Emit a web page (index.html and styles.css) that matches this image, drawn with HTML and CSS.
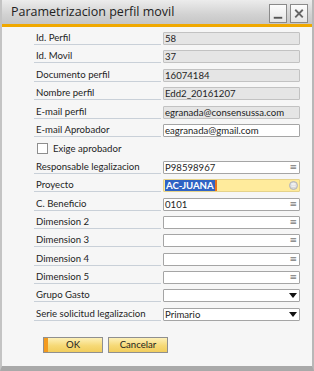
FILE: index.html
```html
<!DOCTYPE html>
<html>
<head>
<meta charset="utf-8">
<link rel="stylesheet" href="styles.css">
</head>
<body>
<div class="window">
  <div class="titlebar">
    <span class="title">Parametrizacion perfil movil</span>
    <div class="tbtns">
      <span class="tbtn"><svg width="17" height="18" viewBox="0 0 17 18"><rect x="4" y="12" width="9" height="2" fill="#555"/></svg></span>
      <span class="tbtn"><svg width="17" height="18" viewBox="0 0 17 18"><path d="M4.5 4.5 L12.5 12.5 M12.5 4.5 L4.5 12.5" stroke="#666" stroke-width="2"/></svg></span>
    </div>
  </div>
  <div class="content">
    <div class="form">
      <div class="row"><span class="lbl">Id. Perfil</span><span class="fld ro">58</span></div>
      <div class="row"><span class="lbl">Id. Movil</span><span class="fld ro">37</span></div>
      <div class="row"><span class="lbl">Documento perfil</span><span class="fld ro">16074184</span></div>
      <div class="row"><span class="lbl">Nombre perfil</span><span class="fld ro">Edd2_20161207</span></div>
      <div class="row"><span class="lbl">E-mail perfil</span><span class="fld ro">egranada@consensussa.com</span></div>
      <div class="row"><span class="lbl">E-mail Aprobador</span><span class="fld">eagranada@gmail.com</span></div>
      <div class="row chkrow"><span class="chk"></span><span class="chklbl">Exige aprobador</span></div>
      <div class="row"><span class="lbl">Responsable legalizacion</span><span class="fld">P98598967<span class="ico">≡</span></span></div>
      <div class="row"><span class="lbl">Proyecto</span><span class="fld active"><span class="sel">AC-JUANA</span><span class="caret"></span><span class="circ">≡</span></span></div>
      <div class="row"><span class="lbl">C. Beneficio</span><span class="fld">0101<span class="ico">≡</span></span></div>
      <div class="row"><span class="lbl">Dimension 2</span><span class="fld"><span class="ico">≡</span></span></div>
      <div class="row"><span class="lbl">Dimension 3</span><span class="fld"><span class="ico">≡</span></span></div>
      <div class="row"><span class="lbl">Dimension 4</span><span class="fld"><span class="ico">≡</span></span></div>
      <div class="row"><span class="lbl">Dimension 5</span><span class="fld"><span class="ico">≡</span></span></div>
      <div class="row"><span class="lbl">Grupo Gasto</span><span class="fld"><span class="tri"></span></span></div>
      <div class="row"><span class="lbl">Serie solicitud legalizacion</span><span class="fld">Primario<span class="tri"></span></span></div>
    </div>
    <div class="buttons">
      <span class="btn ok">OK</span>
      <span class="btn">Cancelar</span>
    </div>
  </div>
</div>
</body>
</html>
```
FILE: styles.css
```css
* { box-sizing: border-box; }
html, body { margin: 0; padding: 0; }
body { width: 314px; height: 371px; overflow: hidden; font-family: Lato, "Open Sans", sans-serif; color: #1e1e1e; }
.window { width: 314px; height: 371px; display: flex; flex-direction: column; border-left: 2px solid #c4c4c4; border-right: 2px solid #b8b8b8; border-bottom: 5px solid #a9a9a9; background: #f6f6f6; }
.titlebar { height: 27px; flex: none; display: flex; align-items: flex-start; justify-content: space-between; background: linear-gradient(#ececec, #d2d2d2 60%, #c6c6c6); border-bottom: 3px solid #f0a800; padding: 0 4px 0 9px; }
.title { font-family: "Open Sans", sans-serif; font-size: 12.5px; line-height: 24px; color: #222; }
.tbtns { display: flex; gap: 3px; padding-top: 4px; }
.tbtn { width: 18px; height: 19px; border: 1px solid #8a8a8a; background: linear-gradient(#fdfdfd, #e4e4e4); display: flex; }
.content { padding: 5px 12px 0 32px; flex: 1; }
.form { display: flex; flex-direction: column; }
.row { height: 18.4px; display: grid; grid-template-columns: 127px 137px; column-gap: 2px; align-items: start; }
.lbl { height: 13px; border-bottom: 1px solid #c9d0d8; font-size: 9.6px; line-height: 12px; padding-left: 2px; white-space: nowrap; overflow: hidden; }
.fld { position: relative; height: 13px; border: 1px solid #a5a5a5; background: #fff; font-size: 9.6px; line-height: 11px; padding-left: 1px; white-space: nowrap; border-radius: 1px; }
.fld.ro { background: #e5e5e5; border-color: #c2c2c2; }
.fld.active { background: #ffeb9c; border-color: #e5d28a; }
.sel { background: #2f63c4; color: #fff; padding: 0 1px; display: inline-block; height: 11px; font-weight: bold; }
.caret { display: inline-block; width: 2px; height: 11px; background: #e8731c; vertical-align: top; }
.ico { position: absolute; right: 2px; top: -1px; font-family: "DejaVu Sans", sans-serif; font-size: 9px; line-height: 12px; color: #777; }
.circ { position: absolute; right: 1px; top: 1px; width: 9px; height: 9px; border-radius: 50%; background: #d8d8d8; border: 1px solid #b5b5b5; color: #fff; font-family: "DejaVu Sans", sans-serif; font-size: 7px; line-height: 7px; text-align: center; }
.tri { position: absolute; right: 2px; top: 3px; width: 0; height: 0; border-left: 4px solid transparent; border-right: 4px solid transparent; border-top: 5px solid #111; }
.chkrow { display: flex; align-items: flex-start; padding-left: 3px; gap: 5px; height: 18.4px; padding-top: 1px; }
.chk { width: 11px; height: 11px; border: 1px solid #8e8e8e; background: #fff; }
.chklbl { font-size: 9.6px; line-height: 11px; }
.buttons { display: flex; gap: 5px; padding: 11px 0 0 9px; }
.btn { width: 60px; height: 16px; border: 1px solid #8f8f8f; background: linear-gradient(#fdf0b8, #f6d976 55%, #f1cd5c); font-size: 9.6px; line-height: 14px; text-align: center; }
.btn.ok { box-shadow: inset 4px 0 0 #f39a1e; }
```
